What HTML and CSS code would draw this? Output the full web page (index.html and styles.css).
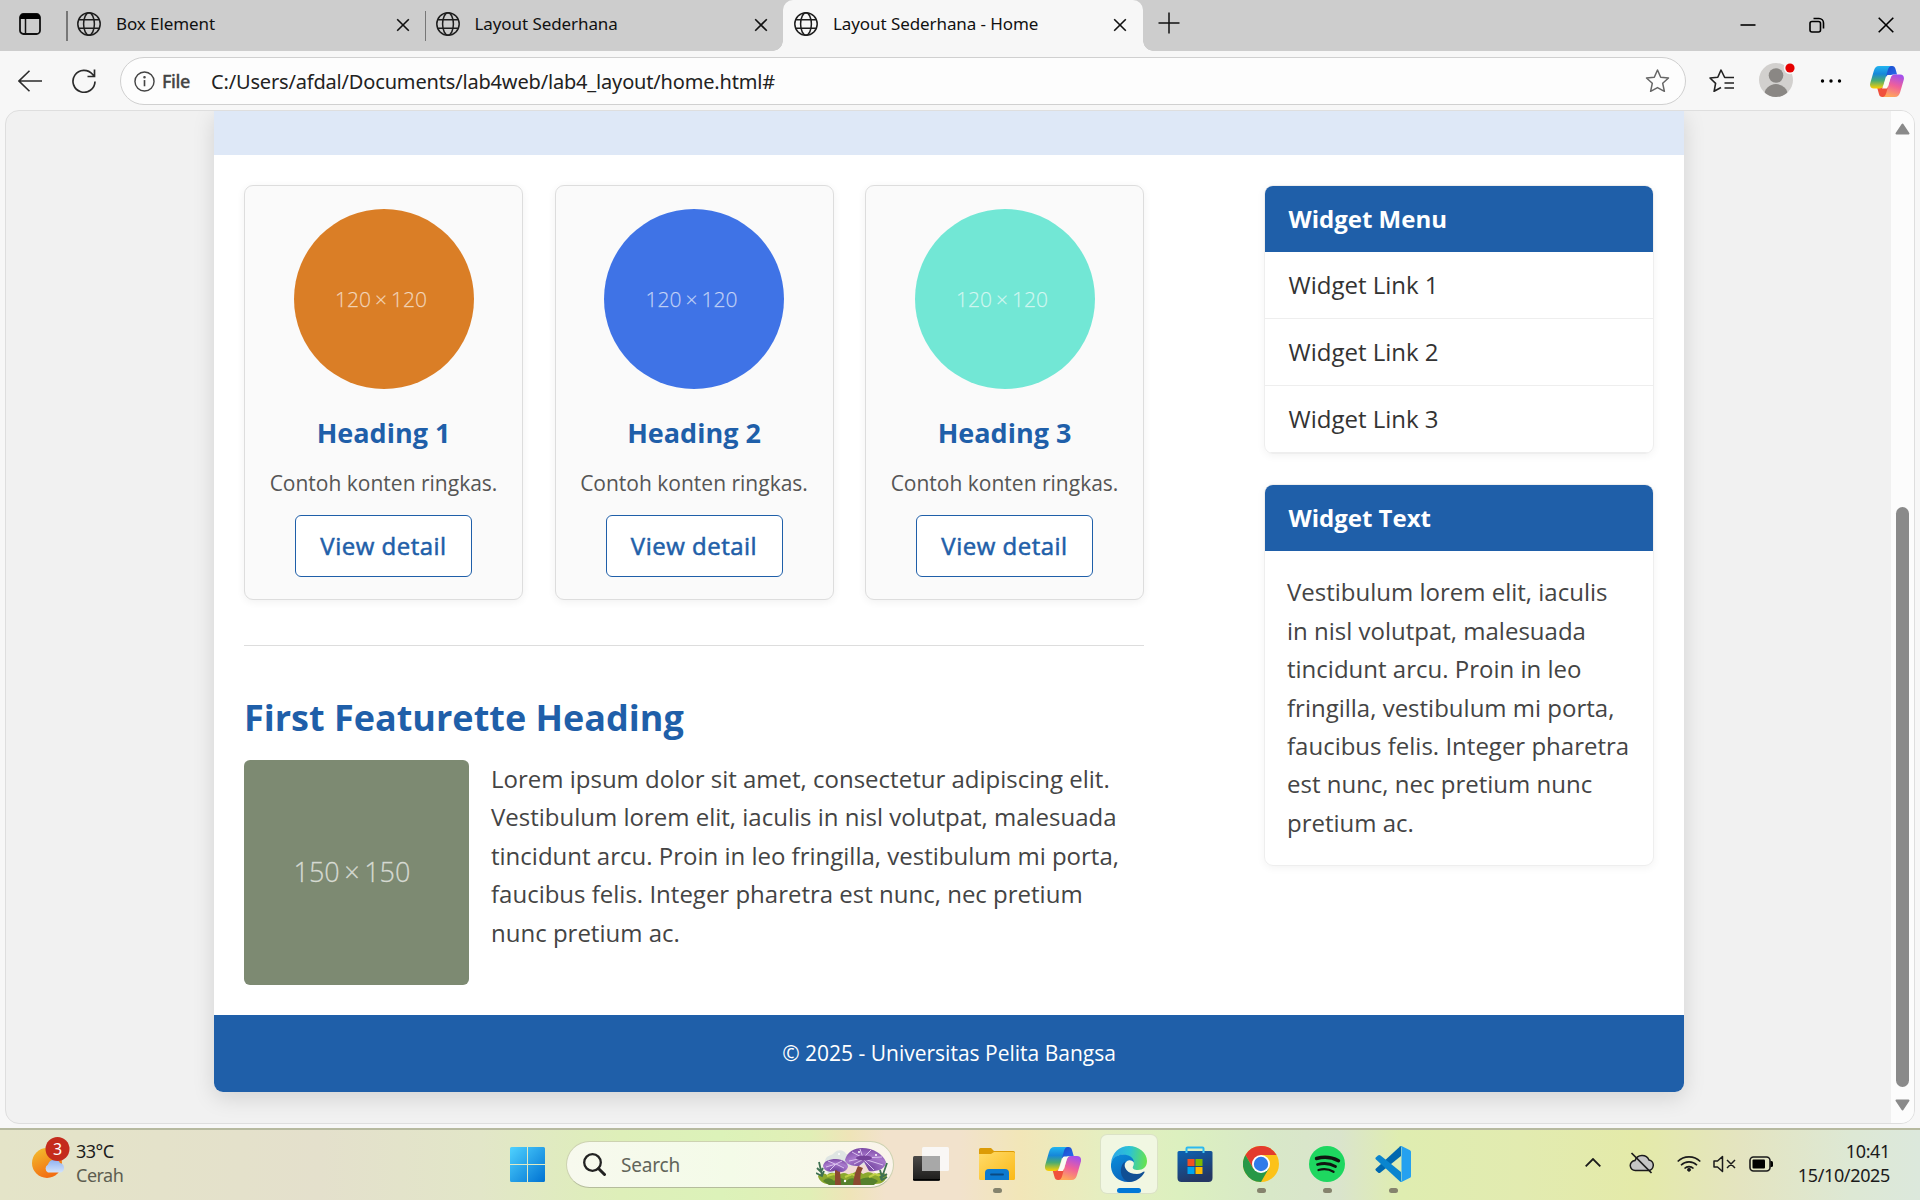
FILE: index.html
```html
<!DOCTYPE html>
<html lang="id">
<head>
<meta charset="utf-8">
<title>Layout Sederhana - Home</title>
<link rel="stylesheet" href="styles.css">
</head>
<body>
<svg class="defs" width="0" height="0" aria-hidden="true">
  <defs>
    <linearGradient id="cpTop" x1="0" y1="0" x2="0" y2="1"><stop offset="0" stop-color="#22b5f0"/><stop offset=".35" stop-color="#1687d9"/><stop offset=".65" stop-color="#4aab72"/><stop offset="1" stop-color="#ffd000"/></linearGradient>
    <linearGradient id="cpBlue" x1="0" y1="0" x2="1" y2="1"><stop offset="0" stop-color="#1a48c8"/><stop offset="1" stop-color="#2a6ff0"/></linearGradient>
    <linearGradient id="cpPink" x1=".7" y1="0" x2=".4" y2="1"><stop offset="0" stop-color="#a24fee"/><stop offset=".5" stop-color="#f0609a"/><stop offset="1" stop-color="#ffa85a"/></linearGradient>
    <linearGradient id="win" x1="0" y1="0" x2="1" y2="1"><stop offset="0" stop-color="#4fd2ff"/><stop offset="1" stop-color="#0072d2"/></linearGradient>
    <linearGradient id="sun" x1="0" y1="0" x2=".5" y2="1"><stop offset="0" stop-color="#f3c12f"/><stop offset="1" stop-color="#f26d12"/></linearGradient>
    <linearGradient id="cloud" x1="0" y1="0" x2="0" y2="1"><stop offset="0" stop-color="#8fb2f0"/><stop offset="1" stop-color="#d3e3fb"/></linearGradient>
    <linearGradient id="folder" x1="0" y1="0" x2="1" y2="1"><stop offset="0" stop-color="#ffdb6a"/><stop offset="1" stop-color="#fbb917"/></linearGradient>
    <linearGradient id="edgeTop" x1="0" y1=".4" x2="1" y2=".5"><stop offset="0" stop-color="#2ba6ea"/><stop offset=".5" stop-color="#2cc3d4"/><stop offset="1" stop-color="#66e34e"/></linearGradient>
    <linearGradient id="edgeMid" x1="0" y1="0" x2=".5" y2="1"><stop offset="0" stop-color="#0a8fdc"/><stop offset="1" stop-color="#0b66bc"/></linearGradient>
    <linearGradient id="store" x1="0" y1="0" x2=".4" y2="1"><stop offset="0" stop-color="#0c63b4"/><stop offset="1" stop-color="#243763"/></linearGradient>
    <linearGradient id="tv" x1="0" y1="0" x2="0" y2="1"><stop offset="0" stop-color="#4c4a48"/><stop offset="1" stop-color="#1c1b1a"/></linearGradient>
    <symbol id="globe" viewBox="0 0 24 24"><g fill="none" stroke="#1d1d1d" stroke-width="1.5"><circle cx="12" cy="12" r="11.2"/><ellipse cx="12" cy="12" rx="5.4" ry="11.2"/><path d="M1.8 7.8h20.4M1.8 16.2h20.4"/></g></symbol>
    <symbol id="cross" viewBox="0 0 14 14"><path d="M1.2 1.2l11.6 11.6M12.8 1.2L1.2 12.8" stroke="#111" stroke-width="1.6" fill="none"/></symbol>
    <symbol id="copilot" viewBox="0 0 36 33">
      <path d="M17 0h6.500c2 0 3 1.200 3.500 3l1.700 6H25c-3 0-4.500 1.500-5.300 4L16 10z" fill="url(#cpBlue)"/>
      <path d="M19 33h-6c-2 0-3-1.200-3.500-3L7.500 23h5c2.500 0 3.500-1.500 4.300-4L21 25z" fill="#f0503c"/>
      <path d="M9.500 0H23c-2 0-3.300 1.500-4 4l-4.700 16c-.8 2.800-2 4-4.300 4H4c-3.400 0-4.800-2.500-3.700-6.300L4 5C5 1.700 6.500 0 9.500 0z" fill="url(#cpTop)"/>
      <path d="M26.500 33H13.200c2 0 3.200-1.500 3.900-4l4.600-16c.8-2.800 2-4 4.300-4h6c3.400 0 4.800 2.500 3.700 6.300L32 28c-1 3.300-2.500 5-5.500 5z" fill="url(#cpPink)"/>
      <path d="M19.300 9.500h4.500c-1.300.8-1.800 2-2.300 3.500l-2.800 9.500c-.3 1-.8 1.500-1.800 1.500h-4.500c1.200-.8 1.700-2 2.200-3.500l2.800-9c.4-1.300.9-2 1.900-2z" fill="#fbfbf4"/>
    </symbol>
  </defs>
</svg>

<header class="tabstrip">
  <svg class="tab-actions" viewBox="0 0 22 22"><rect x="1" y="1" width="20" height="20" rx="3.500" fill="none" stroke="#111" stroke-width="1.800"/><path d="M1 6V4.500A3.500 3.500 0 0 1 4.500 1h13A3.500 3.500 0 0 1 21 4.500V6z"/><path d="M6.500 6v15" stroke="#111" stroke-width="1.500"/></svg>
  <div class="tab first"><svg class="globe"><use href="#globe"/></svg><span>Box Element</span><svg class="x"><use href="#cross"/></svg></div>
  <div class="tab second"><svg class="globe"><use href="#globe"/></svg><span>Layout Sederhana</span><svg class="x"><use href="#cross"/></svg></div>
  <div class="tab active"><svg class="globe"><use href="#globe"/></svg><span>Layout Sederhana - Home</span><svg class="x"><use href="#cross"/></svg></div>
  <svg class="plus" viewBox="0 0 22 22"><path d="M11 .5v21M.5 11h21" stroke="#111" stroke-width="1.500"/></svg>
  <div class="window-buttons">
    <svg width="16" height="16" viewBox="0 0 16 16"><path d="M.5 8h15" stroke="#000" stroke-width="1.600"/></svg>
    <svg width="16" height="16" viewBox="0 0 16 16" fill="none" stroke="#000" stroke-width="1.600"><rect x="1" y="4.500" width="10.500" height="10.500" rx="2"/><path d="M4.500 1.500h5.500a4.500 4.500 0 0 1 4.500 4.500v5.500"/></svg>
    <svg width="16" height="16" viewBox="0 0 16 16"><path d="M.7.700l14.600 14.600M15.300.700L.700 15.300" stroke="#000" stroke-width="1.600"/></svg>
  </div>
</header>

<nav class="toolbar">
  <svg class="back" viewBox="0 0 24 22" fill="none" stroke="#2b2b2b" stroke-width="1.600"><path d="M24 11H1M11.500.700L1 11l10.500 10.300"/></svg>
  <svg class="reload" viewBox="0 0 24 24" fill="none" stroke="#2b2b2b" stroke-width="1.700"><path d="M23 12.500A11 11 0 1 1 20.500 5.300L22.500 7.500M22.500.500v7h-7"/></svg>
  <div class="address">
    <svg class="info" viewBox="0 0 22 22" fill="none" stroke="#444" stroke-width="1.500"><circle cx="11" cy="11" r="10"/><path d="M11 9.500v6.500" stroke-width="1.700"/><circle cx="11" cy="6.500" r=".6"/></svg>
    <span class="scheme">File</span>
    <span class="url">C:/Users/afdal/Documents/lab4web/lab4_layout/home.html#</span>
    <svg class="star" viewBox="0 0 24 24" fill="none" stroke="#666" stroke-width="1.500" stroke-linejoin="round"><path d="M12 1l3.200 7.200 7.800.800-5.800 5.300 1.700 8L12 18.600l-6.900 3.700 1.700-8L1 9l7.800-.8z"/></svg>
  </div>
  <svg class="favs" viewBox="0 0 25 24" fill="none" stroke="#222" stroke-width="1.600" stroke-linejoin="round"><path d="M25 8.500h-9.300L12 1 8.800 8.200 1 9l5.600 5.300-1.500 8 6.900-3.800M15.500 14H25M15.500 19H25"/></svg>
  <svg class="avatar" viewBox="0 0 36 36"><defs><clipPath id="av"><circle cx="17" cy="19" r="17"/></clipPath></defs><circle cx="17" cy="19" r="17" fill="#d2d0ce"/><g clip-path="url(#av)" fill="#8a8784"><circle cx="17" cy="14.500" r="7.300"/><circle cx="17" cy="35" r="12"/></g><circle cx="31" cy="7" r="6.200" fill="#f7f7f7"/><circle cx="31" cy="7" r="4.600" fill="#e60000"/></svg>
  <svg class="dots" viewBox="0 0 22 4"><circle cx="2.500" cy="2" r="1.700"/><circle cx="11" cy="2" r="1.700"/><circle cx="19.500" cy="2" r="1.700"/></svg>
  <svg class="copilot-btn"><use href="#copilot"/></svg>
</nav>

<div class="frame">
  <div class="viewport">
    <div class="canvas">
      <div class="container">
        <div class="hero"></div>
        <div class="wrapper">
          <main class="main">
            <div class="row">
              <article class="box"><div class="circle orange">120 × 120</div><h3>Heading 1</h3><p>Contoh konten ringkas.</p><a class="btn">View detail</a></article>
              <article class="box"><div class="circle blue">120 × 120</div><h3>Heading 2</h3><p>Contoh konten ringkas.</p><a class="btn">View detail</a></article>
              <article class="box"><div class="circle mint">120 × 120</div><h3>Heading 3</h3><p>Contoh konten ringkas.</p><a class="btn">View detail</a></article>
            </div>
            <hr>
            <section class="entry">
              <h2>First Featurette Heading</h2>
              <div class="media">
                <div class="thumb">150 × 150</div>
                <p>Lorem ipsum dolor sit amet, consectetur adipiscing elit.<br>Vestibulum lorem elit, iaculis in nisl volutpat, malesuada<br>tincidunt arcu. Proin in leo fringilla, vestibulum mi porta,<br>faucibus felis. Integer pharetra est nunc, nec pretium<br>nunc pretium ac.</p>
              </div>
            </section>
          </main>
          <aside class="sidebar">
            <section class="widget"><h3>Widget Menu</h3><ul><li>Widget Link 1</li><li>Widget Link 2</li><li>Widget Link 3</li></ul></section>
            <section class="widget"><h3>Widget Text</h3><p>Vestibulum lorem elit, iaculis<br>in nisl volutpat, malesuada<br>tincidunt arcu. Proin in leo<br>fringilla, vestibulum mi porta,<br>faucibus felis. Integer pharetra<br>est nunc, nec pretium nunc<br>pretium ac.</p></section>
          </aside>
        </div>
        <footer class="footer">© 2025 - Universitas Pelita Bangsa</footer>
      </div>
    </div>
    <div class="scrollbar">
      <svg width="15" height="12" viewBox="0 0 15 12"><path d="M7.500 1.500L13.500 10.500h-12z" fill="#8a8a8a" stroke="#8a8a8a" stroke-width="2" stroke-linejoin="round"/></svg>
      <div class="thumb-bar"></div>
      <svg width="15" height="12" viewBox="0 0 15 12"><path d="M7.500 10.500L13.500 1.500h-12z" fill="#8a8a8a" stroke="#8a8a8a" stroke-width="2" stroke-linejoin="round"/></svg>
    </div>
  </div>
</div>

<footer class="taskbar">
  <div class="weather">
    <svg width="40" height="44" viewBox="0 0 40 44"><circle cx="15" cy="27" r="15" fill="url(#sun)"/><path d="M16 36.500a4.500 4.500 0 0 1 0-8 6.500 6.500 0 0 1 12-1.500 5 5 0 0 1 1 9.500z" fill="url(#cloud)"/><circle cx="25.500" cy="13" r="12" fill="#c42b1c"/><text x="25.500" y="18.600" text-anchor="middle" class="badge">3</text></svg>
    <div class="lines"><span class="temp">33°C</span><span class="cond">Cerah</span></div>
  </div>
  <svg class="start" viewBox="0 0 35 35" fill="url(#win)"><path d="M1.500 0H17v17H0V1.500A1.500 1.500 0 0 1 1.500 0zM18 0h15.500A1.500 1.500 0 0 1 35 1.500V17H18zM0 18h17v17H1.500A1.500 1.500 0 0 1 0 33.500zM18 18h17v15.500a1.500 1.500 0 0 1-1.500 1.500H18z"/></svg>
  <div class="search">
    <svg class="lens" viewBox="0 0 23 23" fill="none" stroke="#222"><circle cx="9.500" cy="9.500" r="8.300" stroke-width="2.300"/><path d="M15.500 15.500l6 6" stroke-width="3" stroke-linecap="round"/></svg>
    <span>Search</span>
    <svg class="mushroom" viewBox="0 0 72 38">
      <defs><radialGradient id="cap" cx=".5" cy=".9" r=".9"><stop offset="0" stop-color="#6a3d98"/><stop offset=".6" stop-color="#a878cc"/><stop offset="1" stop-color="#7c4aa5"/></radialGradient></defs>
      <path d="M9 15c0-7 7-6 9-9 5-5 11-2 12 1l22 6 7 14-20 7-26-3z" fill="#dfe5e3"/><path d="M20 21l34-4 7 13-42 4z" fill="#f3dcd5"/>
      <path d="M2 29c3-4 7-3 9-1 4-4 9-2 11 1 4-5 10-3 12 0 4-5 9-6 13-2 5-3 9-2 12 1 4-3 8-3 12 0-1 6-5 9-11 9H15C8 38 3 34 2 29z" fill="#8ba82e"/>
      <path d="M7 34c4-4 8-3 11 0 4-5 9-3 12 0 5-4 9-3 12 0 7-5 15-4 20 0l-4 4H13z" fill="#55802c"/><path d="M11 29l7-2 5 3M29 30l7-3 5 3M53 30l6-3 6 2" stroke="#bfd045" stroke-width="2" fill="none"/>
      <path d="M42 19l5 2c-3 5-3 10-2 17h-8c1-8 2-13 5-19z" fill="#8c4930"/><path d="M19 23h5l1 15h-6z" fill="#8c4930"/>
      <path d="M29 13C31 5 38 1 46 1c11 0 21 6 24 14 0 7-9 10-17 9l-5-9-5 4c-8 0-13-2-14-6z" fill="url(#cap)"/><path d="M47 11L33 14M47 11l-11-6M47 11l-3-9M47 11l8-8M47 11l19-1M48 12l19 6M48 13l10 10M46 13l-8 4" stroke="#dbc2ef" stroke-width="1"/><ellipse cx="48" cy="11" rx="8" ry="2.500" fill="#75429a"/>
      <path d="M7 19c1-5 6-7 13-7 7 0 12 4 12 8-2 6-9 6-12 3-5 3-12 2-13-4z" fill="url(#cap)"/><path d="M20 17l-10 3M20 17l-6 6M20 17l8 4M19 17l-7-3M20 17l6-3" stroke="#dbc2ef" stroke-width="1"/>
      <path d="M3 15l3 13M1 21l4 4 2-4M0 26l6 3 2-5M71 16l-6 17M64 23l2 7 5-3M64 29l2 4 5-3" stroke="#3f7152" stroke-width="1.800" fill="none"/>
      <g fill="#fff"><circle cx="23" cy="7" r="1"/><circle cx="29" cy="34" r="1.200"/><circle cx="43" cy="5" r="1"/><circle cx="60" cy="8" r="1"/></g>
    </svg>
  </div>
  <div class="apps">
    <div class="app"><svg width="36" height="36" viewBox="0 0 36 36"><rect x="0" y="10" width="27" height="25" rx="1.500" fill="url(#tv)"/><path d="M0 33.500h27" stroke="#000"/><rect x="9" y="1" width="27" height="24" rx="1.500" fill="#fafafa" opacity=".9"/><path d="M9 10h18v15H9z" fill="#a8a8a8"/></svg></div>
    <div class="app run"><svg width="36" height="36" viewBox="0 0 36 36"><path d="M0 3.500A1.500 1.500 0 0 1 1.500 2h10.500l3 3h19.500A1.500 1.500 0 0 1 36 6.500V12H0z" fill="#dc9b06"/><path d="M0 8h12l3-2h19.500A1.500 1.500 0 0 1 36 7.500v25a1.500 1.500 0 0 1-1.500 1.500h-33A1.500 1.500 0 0 1 0 32.500z" fill="url(#folder)"/><path d="M6 34v-7a4 4 0 0 1 4-4h16a4 4 0 0 1 4 4v7z" fill="#0c7ad0"/><path d="M12 28.500h12" stroke="#0a4a82" stroke-width="1.800" stroke-linecap="round"/></svg></div>
    <div class="app"><svg width="36" height="33"><use href="#copilot"/></svg></div>
    <div class="app run current"><svg width="36" height="36" viewBox="0 0 36 36"><path d="M0 17C1 7 8 0 18 0c10 0 18 7 18 15 0 6-4 9-9 9-4 0-6-1.500-5-3.500 2-3 .5-8-5-10.500C10 7 3 10 0 17z" fill="url(#edgeTop)"/><path d="M0 18C1 12 6 8.500 12 8.500c7 0 11 4 11 8-3-3.500-7-3-9 1-3 6 1 14 9 17.500C10 39-1 30 0 18z" fill="url(#edgeMid)"/><path d="M14 15.500c-2 6 2 12.500 12 12.500 3 0 5-1.500 7-2.500.6 0 .7.700.3 1.300C30 32 25 36 18 36 8 33 8 20 14 15.500z" fill="#104f94"/></svg></div>
    <div class="app"><svg width="36" height="36" viewBox="0 0 36 36"><path d="M9.500 7V2.500a1 1 0 0 1 1-1h15a1 1 0 0 1 1 1V7" fill="none" stroke="#2cb9f0" stroke-width="2"/><path d="M.5 6.500A1.500 1.500 0 0 1 2 5h32a1.500 1.500 0 0 1 1.500 1.500V32a4 4 0 0 1-4 4h-27a4 4 0 0 1-4-4z" fill="url(#store)"/><path d="M9.500 7V5M26.500 7V5" stroke="#42c9f5" stroke-width="2"/><path fill="#f25022" d="M10.500 13h7v7h-7z"/><path fill="#7fba00" d="M18.500 13h7v7h-7z"/><path fill="#00a4ef" d="M10.500 21h7v7h-7z"/><path fill="#ffb900" d="M18.500 21h7v7h-7z"/></svg></div>
    <div class="app run"><svg width="36" height="36" viewBox="0 0 36 36"><circle cx="18" cy="18" r="18" fill="#fcc219"/><path d="M18 9h15.600A18 18 0 0 0 2.400 9l7.800 13.500z" fill="#e33b2e"/><path d="M2.400 9A18 18 0 0 0 18 36l7.800-13.500L10.200 22.500z" fill="#279847"/><circle cx="18" cy="18" r="9" fill="#fff"/><circle cx="18" cy="18" r="7.200" fill="#2f7bea"/></svg></div>
    <div class="app run"><svg width="36" height="36" viewBox="0 0 36 36"><circle cx="18" cy="18" r="18" fill="#1ed760"/><g fill="none" stroke="#101510" stroke-linecap="round"><path d="M7.500 12.500c7.500-2 15.500-1.300 22 2.300" stroke-width="3.400"/><path d="M8.500 18.500c6.500-1.800 12.800-1 18 2" stroke-width="2.800"/><path d="M9.500 24c5-1.400 10.500-1 15 1.800" stroke-width="2.300"/></g></svg></div>
    <div class="app run"><svg width="36" height="36" viewBox="0 0 36 36"><path d="M26 0v10L5.500 26.500a2 2 0 0 1-2.500 0l-2-1.800a1.600 1.600 0 0 1 0-2.300L25 .500z" fill="#0068b0"/><path d="M26 36V26L5.500 9.500a2 2 0 0 0-2.500 0L1 11.300a1.600 1.600 0 0 0 0 2.300L25 35.500z" fill="#0a85cf"/><path d="M25.500.300a1.500 1.500 0 0 1 1.500 0l8 3.900a2 2 0 0 1 1 1.800v24a2 2 0 0 1-1 1.800l-8 3.900a1.500 1.500 0 0 1-1.500 0c.6-.3 1-.8 1-1.500V2c0-.8-.4-1.400-1-1.700z" fill="#25a1f0"/></svg></div>
  </div>
  <div class="tray">
    <svg class="chev" viewBox="0 0 16 9" fill="none" stroke="#1b1b1b" stroke-width="1.800"><path d="M.7 8.300L8 1l7.300 7.300"/></svg>
    <svg class="cloud" viewBox="0 0 24 22"><path d="M6 18.500a5 5 0 0 1-.5-10A7.500 7.500 0 0 1 19.500 8a5.300 5.300 0 0 1-1 10.500z" fill="#c5c5c5" stroke="#1b1b1b" stroke-width="1.500"/><path d="M2 1l20 20" stroke="#1b1b1b" stroke-width="1.700"/></svg>
    <svg class="wifi" viewBox="0 0 24 18" fill="none" stroke="#1b1b1b" stroke-width="1.600"><path d="M.7 7.500a16 16 0 0 1 22.600 0M4 11.200a11.300 11.300 0 0 1 16 0M7.500 14.500a6.400 6.400 0 0 1 9 0"/><circle cx="12" cy="15.700" r="1.500" fill="#1b1b1b" stroke-width="1"/></svg>
    <svg class="sound" viewBox="0 0 24 18" fill="none" stroke="#1b1b1b" stroke-width="1.500" stroke-linejoin="round"><path d="M1 6v6h3.500l5 4.500v-15L4.500 6zM14 5l8 8M22 5l-8 8"/></svg>
    <svg class="battery" viewBox="0 0 24 16"><rect x="1" y="1" width="20" height="14" rx="3.500" fill="none" stroke="#1b1b1b" stroke-width="1.600"/><rect x="3.500" y="3.500" width="12.500" height="9" rx="1"/><path d="M21.500 5h1a1.500 1.500 0 0 1 1.500 1.500v3a1.500 1.500 0 0 1-1.500 1.500h-1z"/></svg>
    <div class="clock"><span class="time">10:41</span><span class="date">15/10/2025</span></div>
  </div>
</footer>
</body>
</html>
```
FILE: styles.css
```css
* { box-sizing: border-box; }
body {
  margin: 0; width: 1920px; height: 1200px; overflow: hidden;
  display: flex; flex-direction: column;
  background: #f7f7f7; color: #333;
  font-family: "Open Sans", "Noto Sans", sans-serif;
}
svg { display: block; flex: none; }
.defs { position: absolute; }
h2, h3, p, ul, hr { margin: 0; padding: 0; }
span { white-space: nowrap; }

/* Browser tabs */
.tabstrip { height: 51px; flex: none; display: flex; align-items: flex-start; background: #cdcdcd; color: #111; font: 18px/24px "Noto Sans", sans-serif; }
.tab-actions { width: 22px; height: 22px; margin: 13px 25px 0 19px; }
.tab { position: relative; width: 358.5px; height: 51px; display: flex; padding: 12px 0 0 11px; }
.tab.first::before, .tab.second::before { content: ""; position: absolute; left: 0; top: 11px; width: 1.5px; height: 30px; background: #777; }
.tab .globe { width: 24px; height: 24px; margin-right: 15px; }
.tab .x { width: 14px; height: 14px; margin: 6px 15px 0 auto; }
.tab.active { width: 360px; background: #f7f7f7; border-radius: 10px 10px 0 0; }
.tab.active .x { margin-right: 16px; }
.tab.active::before, .tab.active::after { content: ""; position: absolute; bottom: 0; width: 10px; height: 10px; }
.tab.active::before { left: -10px; background: radial-gradient(circle at 0 0, transparent 9.500px, #f7f7f7 10px); }
.tab.active::after { right: -10px; background: radial-gradient(circle at 100% 0, transparent 9.500px, #f7f7f7 10px); }
.tab span { letter-spacing: -.08px; font-size: 17px; line-height: 23px; }
.plus { width: 22px; height: 22px; margin: 12px 0 0 15px; }
.window-buttons { display: flex; gap: 53px; margin: 17px 26px 0 auto; }

/* Toolbar */
.toolbar { height: 59px; flex: none; display: flex; align-items: center; padding: 1px 16px 0 18px; }
.back { width: 24px; height: 22px; margin-right: 30px; }
.reload { width: 24px; height: 24px; margin-right: 24px; }
.address { width: 1566px; height: 48px; display: flex; align-items: center; background: #fdfdfd; border: 1.500px solid #d0d0d0; border-radius: 24px; padding: 0 15px 0 13px; }
.info { width: 21px; height: 21px; margin-right: 7px; }
.scheme { width: 49px; font: 500 18px "Noto Sans", sans-serif; letter-spacing: -.4px; color: #444; -webkit-text-stroke: .3px #444; }
.url { font: 20px "Noto Sans", sans-serif; letter-spacing: -.17px; color: #222; }
.star { width: 25px; height: 24px; margin-left: auto; }
.favs { width: 25px; height: 24px; margin-left: 23px; }
.avatar { width: 36px; height: 36px; margin: 0 0 4px 25px; }
.dots { width: 22px; height: 4px; margin-left: 25px; }
.copilot-btn { width: 34px; height: 31px; margin-left: auto; }

/* Page area */
.frame { height: 1018px; flex: none; padding: 0 5px 4px; }
.viewport { height: 1014px; display: flex; border: 1px solid #dedede; border-radius: 14px; overflow: hidden; background: #f1f1f1; }
.canvas { width: 1885px; padding-left: 208px; }
.container { width: 1470px; height: 981px; background: #fff; border-radius: 0 0 9px 9px; box-shadow: 0 6px 22px rgba(0, 0, 0, .13); }
.hero { height: 44px; background: #dee8f7; }
.wrapper { height: 860px; display: flex; justify-content: space-between; padding: 30px 30px 0; }
.main { width: 900px; }
.row { display: flex; justify-content: space-between; }
.box { width: 279px; height: 415px; display: flex; flex-direction: column; align-items: center; padding-top: 23px; border: 1px solid #ddd; border-radius: 9px; background: #fafafa; box-shadow: 0 2px 8px rgba(0, 0, 0, .06); }
.circle { width: 180px; height: 180px; border-radius: 50%; display: flex; align-items: center; justify-content: center; padding-right: 5px; color: rgba(255, 255, 255, .62); font-size: 21px; font-weight: 300; word-spacing: -1.500px; -webkit-text-stroke: .25px rgba(255, 255, 255, .5); }
.orange { background: #da7e26; }
.blue { background: #3f73e6; }
.mint { background: #72e7d5; }
.box h3 { margin-top: 22px; font-size: 27px; line-height: 43px; color: #1f5fa9; }
.box p { margin-top: 11px; font-size: 21px; line-height: 36px; color: #555; white-space: nowrap; }
.btn { margin-top: 14px; width: 177px; height: 62px; border: 1px solid #1f5fa9; border-radius: 6px; background: #fff; color: #1f5fa9; font-size: 24px; letter-spacing: .5px; line-height: 60px; text-align: center; -webkit-text-stroke: .55px #1f5fa9; }
hr { margin-top: 45px; border: 0; border-top: 1px solid #ddd; }
.entry h2 { margin-top: 43px; font-size: 36px; line-height: 57px; color: #1f5fa9; }
.media { display: flex; gap: 22px; margin-top: 14px; }
.thumb { flex: none; width: 225px; height: 225px; border-radius: 6px; background: #7d8a72; color: rgba(255, 255, 255, .65); display: flex; align-items: center; justify-content: center; padding: 0 9px 2px 0; font-size: 27px; font-weight: 300; word-spacing: -2.500px; -webkit-text-stroke: .3px rgba(255, 255, 255, .5); }
.media p, .widget p { font-size: 24px; line-height: 38.400px; color: #444; white-space: nowrap; }
.sidebar { width: 390px; display: flex; flex-direction: column; gap: 30px; }
.widget { border: 1px solid #eee; border-radius: 9px; overflow: hidden; box-shadow: 0 2px 8px rgba(0, 0, 0, .05); }
.widget h3 { height: 66px; padding-left: 23.500px; background: #1f5fa9; color: #fff; font-size: 24px; line-height: 66px; }
.widget ul { list-style: none; }
.widget li { height: 67px; padding-left: 23.500px; border-bottom: 1px solid #eee; font-size: 24px; line-height: 66px; color: #333; }
.widget p { padding: 22.400px 22px 22.600px; }
.footer { height: 77px; background: #1f5fa9; border-radius: 0 0 9px 9px; color: #fff; font-size: 21px; line-height: 76px; text-align: center; }
.scrollbar { width: 23px; display: flex; flex-direction: column; align-items: center; justify-content: space-between; padding: 12px 0 12px; background: #fcfcfc; }
.thumb-bar { width: 13px; height: 580px; margin-top: 360px; border-radius: 7px; background: #8a8a8a; }

/* Taskbar */
.taskbar { height: 72px; flex: none; display: flex; border-top: 2px solid #b6b99f; color: #1b1b1b; font: 18px/24px "Noto Sans", sans-serif;
  background: linear-gradient(90deg, #e4e4c8 0, #e4e0cc 320px, #e2e6c8 480px, #deefb9 620px, #dcf2b9 720px, #e1efb6 810px, #efe4b8 850px, #f2e2cc 885px, #f2e2cc 960px, #f2e6b8 1020px, #e6eec0 1100px, #dcf0bf 1180px, #d8e8c8 1270px, #dae4cc 1340px, #dfedb0 1400px, #e2ebb0 1520px, #e4eaa9 1640px, #e4e4c0 1740px, #dde8d4 1850px, #dce8dc 1920px); }
.weather { flex: none; display: flex; width: 510px; padding: 6px 0 0 32px; }
.badge { fill: #fff; font: 16px "Noto Sans", sans-serif; }
.lines { display: flex; flex-direction: column; margin-left: 4px; padding-top: 3px; letter-spacing: -.5px; }
.cond { color: #5d5d50; }
.start { width: 35px; height: 35px; margin-top: 17px; }
.search { width: 328px; height: 47px; margin: 11px 0 0 21px; padding: 0 5px 0 16px; display: flex; align-items: center; border: 1.500px solid #cdd2b1; border-bottom-color: #b5bd9c; border-radius: 24px; background: linear-gradient(90deg, #f7f9ee, #f4fbe8 50%, #faf4eb); }
.lens { width: 23px; height: 23px; }
.search span { margin-left: 15px; font-size: 19px; letter-spacing: -.2px; color: #62655a; }
.mushroom { width: 72px; height: 38px; margin: 2px 0 0 auto; }
.apps { display: flex; gap: 10px; margin: 5px 0 0 9px; }
.app { position: relative; width: 56px; height: 58px; display: flex; align-items: center; justify-content: center; padding-bottom: 1px; border-radius: 6px; }
.run::after { content: ""; position: absolute; bottom: 0; left: 23.500px; width: 9px; height: 5px; border-radius: 3px; background: #85836d; }
.current { background: #f1f7e2; box-shadow: 0 0 0 1px #dbe2c6; }
.current::after { left: 16px; width: 24px; background: #0078d7; }
.tray { flex: 1; display: flex; margin-left: 164px; }
.chev { width: 16px; height: 9px; margin-top: 28px; }
.cloud { width: 25px; height: 22px; margin: 22px 0 0 28px; }
.wifi { width: 24px; height: 18px; margin: 24px 0 0 23px; }
.sound { width: 24px; height: 18px; margin: 25px 0 0 12px; }
.battery { width: 24px; height: 16px; margin: 26px 0 0 12px; }
.clock { display: flex; flex-direction: column; align-items: flex-end; margin: 9px 30px 0 auto; letter-spacing: -.35px; }
```
